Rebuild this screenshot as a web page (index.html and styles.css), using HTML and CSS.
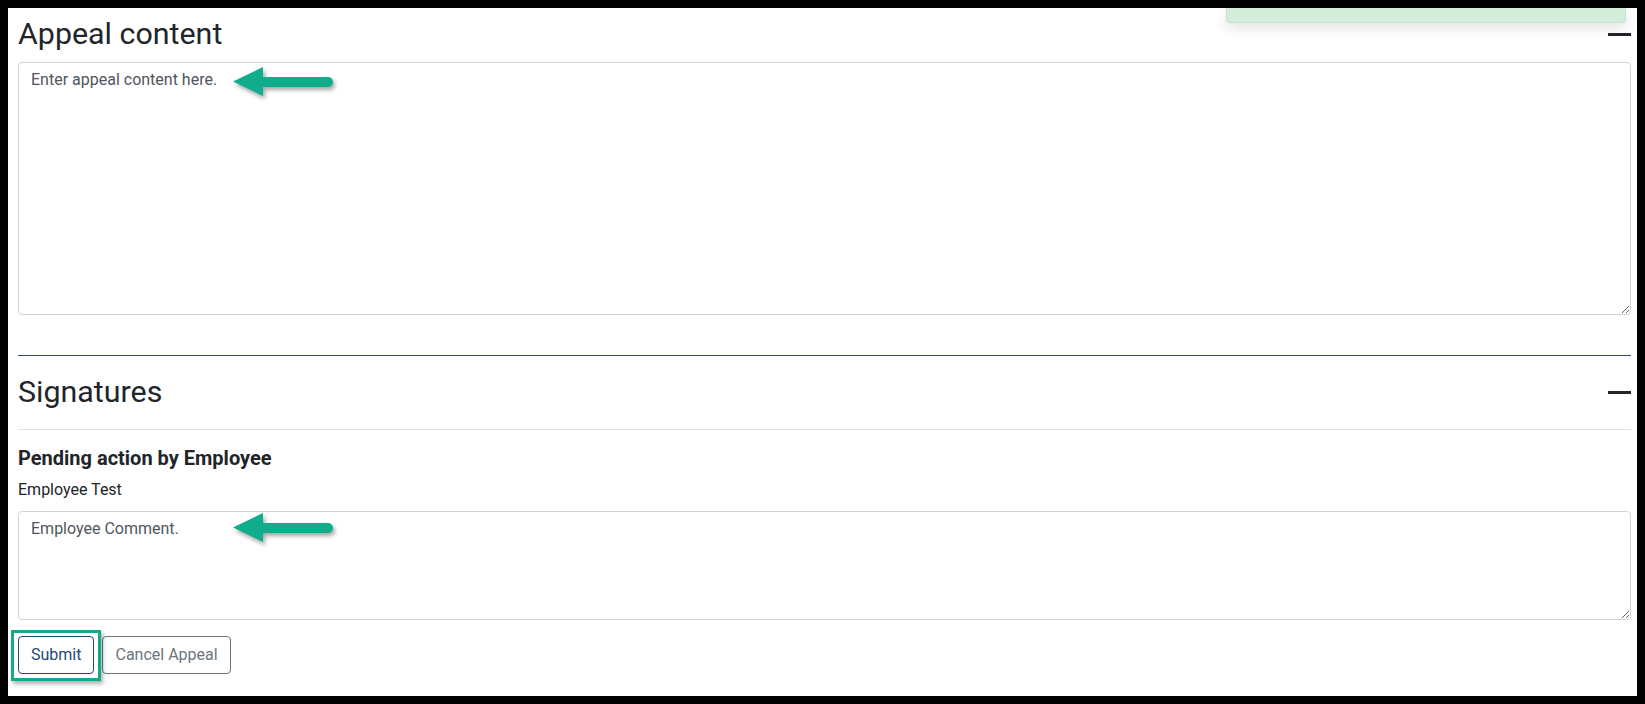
FILE: index.html
```html
<!DOCTYPE html>
<html lang="en">
<head>
    <title>Appeal</title>
    <link rel="stylesheet" href="styles.css">
</head>
<body>
<div class="page">
    <div class="toast"></div>

    <section class="card card-first">
        <div class="card-header">
            <h2 class="card-title">Appeal content</h2>
            <span class="collapse-icon"></span>
        </div>
        <div class="field">
            <textarea class="form-control content-box" placeholder="Enter appeal content here."></textarea>
            <svg class="callout-arrow" viewBox="0 0 106 34" width="106" height="34">
                <polygon points="1,16.5 31,2 31,31" fill="#0fad8c"/>
                <line x1="30" y1="17" x2="96" y2="17" stroke="#0fad8c" stroke-width="10" stroke-linecap="round"/>
            </svg>
        </div>
    </section>

    <section class="card card-signatures">
        <div class="card-header card-header-ruled">
            <h2 class="card-title">Signatures</h2>
            <span class="collapse-icon"></span>
        </div>
        <h5 class="pending-title">Pending action by Employee</h5>
        <div class="signer-name">Employee Test</div>
        <div class="field">
            <textarea class="form-control comment-box" placeholder="Employee Comment."></textarea>
            <svg class="callout-arrow callout-arrow-low" viewBox="0 0 106 34" width="106" height="34">
                <polygon points="1,16.5 31,2 31,31" fill="#0fad8c"/>
                <line x1="30" y1="17" x2="96" y2="17" stroke="#0fad8c" stroke-width="10" stroke-linecap="round"/>
            </svg>
        </div>
        <div class="actions">
            <span class="highlighted">
                <button class="btn btn-primary-outline">Submit</button>
                <span class="highlight-box"></span>
            </span>
            <button class="btn btn-secondary-outline">Cancel Appeal</button>
        </div>
    </section>
</div>
</body>
</html>
```

FILE: styles.css
```css
html, body {
    margin: 0;
    background: #000;
}

body {
    font-family: Roboto, "Liberation Sans", sans-serif;
    color: #212529;
}

.page {
    position: relative;
    box-sizing: border-box;
    margin: 8px;
    height: 688px;
    padding: 7px 6px 0 10px;
    background: #fff;
}

.toast {
    position: absolute;
    top: 0;
    right: 11px;
    width: 400px;
    height: 15px;
    box-sizing: border-box;
    background: #d4edda;
    border: 1px solid #c3e6cb;
    border-top: none;
    border-radius: 0 0 4px 4px;
    box-shadow: 0 5px 14px rgba(0, 0, 0, 0.12);
}

.card-header {
    display: flex;
    align-items: center;
    justify-content: space-between;
}

.card-title {
    margin: 0;
    font-size: 30.4px;
    font-weight: 400;
    line-height: 38px;
}

.collapse-icon {
    width: 23px;
    height: 3px;
    background: #212529;
}

.card-first {
    padding-bottom: 40px;
    border-bottom: 1px solid #2b5080;
}

.card-signatures {
    padding-top: 17px;
}

.card-header-ruled {
    padding-bottom: 18px;
    border-bottom: 1px solid #dee2e6;
}

.field {
    position: relative;
    padding-top: 9px;
}

.form-control {
    display: block;
    width: 100%;
    box-sizing: border-box;
    padding: 5px 12px;
    font-family: Roboto, "Liberation Sans", sans-serif;
    font-size: 16px;
    line-height: 24px;
    color: #495057;
    border: 1px solid #ced4da;
    border-radius: 4px;
    background: #fff;
}

.form-control::placeholder {
    color: #4f565d;
}

.content-box {
    height: 253px;
}

.comment-box {
    height: 109px;
}

.callout-arrow {
    position: absolute;
    left: 214px;
    top: 12px;
    filter: drop-shadow(2px 3px 2px rgba(0, 0, 0, 0.35));
}

.callout-arrow-low {
    top: 9px;
}

.pending-title {
    margin: 16px 0 0;
    font-size: 20px;
    font-weight: 700;
    line-height: 24px;
}

.signer-name {
    margin-top: 8px;
    font-size: 16px;
    line-height: 24px;
}

.actions {
    display: flex;
    gap: 8px;
    margin-top: 16px;
}

.highlighted {
    position: relative;
    display: flex;
}

.highlight-box {
    position: absolute;
    left: -7px;
    top: -6px;
    width: 90px;
    height: 51px;
    box-sizing: border-box;
    border: 3px solid #14a98a;
    box-shadow: 2px 3px 4px rgba(0, 0, 0, 0.3);
    pointer-events: none;
}

.btn {
    height: 38px;
    padding: 6px 12px;
    font-family: Roboto, "Liberation Sans", sans-serif;
    font-size: 16px;
    line-height: 24px;
    background: #fff;
    border-radius: 4px;
    cursor: pointer;
}

.btn-primary-outline {
    color: #24477a;
    border: 1px solid #24477a;
}

.btn-secondary-outline {
    color: #6c757d;
    border: 1px solid #6c757d;
}
```
